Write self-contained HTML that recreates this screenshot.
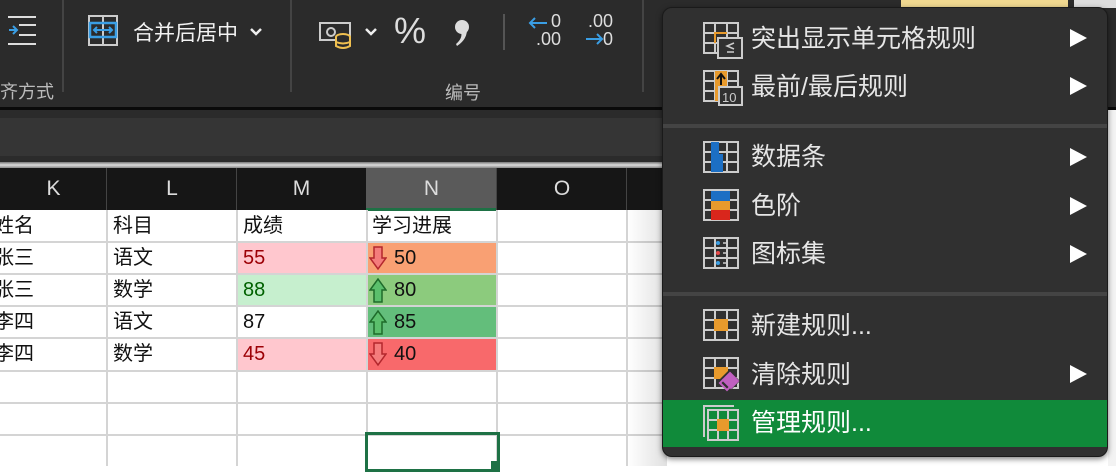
<!DOCTYPE html>
<html><head><meta charset="utf-8"><style>
*{margin:0;padding:0;box-sizing:border-box}
body{width:1116px;height:466px;overflow:hidden;background:#fff;position:relative;font-family:"Liberation Sans","Noto Sans CJK SC",sans-serif}
.a{position:absolute}
.rib{left:0;top:0;width:1116px;height:108px;background:#2b2b2b}
.t{color:#e8e8e8;font-size:21px;white-space:nowrap}
.sep{width:2px;background:#444}
.cell{position:absolute;font-size:20px;color:#111;line-height:32px;padding-left:6px}
.h{position:absolute;top:168px;height:42px;color:#ddd;font-size:21px;text-align:center;line-height:42px}
.vl{position:absolute;width:2px;background:#d4d4d4;top:210px;height:256px}
.hl{position:absolute;height:2px;background:#d4d4d4;left:0;width:662px}
.mi{position:absolute;left:751px;color:#e6e6e6;font-size:25px;white-space:nowrap;line-height:30px}
.ar{position:absolute;left:1070px;width:0;height:0;border-top:9px solid transparent;border-bottom:9px solid transparent;border-left:17px solid #fff}
</style></head><body>
<div class="a rib"></div>
<svg class="a" style="left:6px;top:15px" width="34" height="32"><path d="M2 2H30M13 10H30M13 20H30M2 29H30" stroke="#ddd" stroke-width="2"/><path d="M3 15H11M7 11L11 15L7 19" stroke="#3a9ee4" stroke-width="2" fill="none"/></svg>
<div class="a sep" style="left:62px;top:0;height:92px"></div>
<div class="a t" style="left:0;top:78px;font-size:18px;color:#bbb">齐方式</div>
<svg class="a" style="left:88px;top:15px" width="32" height="32"><rect x="1" y="1" width="28" height="29" fill="none" stroke="#ccc" stroke-width="2"/><path d="M15 1V30" stroke="#ccc" stroke-width="2"/><rect x="2" y="8" width="26" height="14" fill="none" stroke="#3a9ee4" stroke-width="2.5"/><path d="M6 15H24M9 12L6 15L9 18M21 12L24 15L21 18" stroke="#3a9ee4" stroke-width="2" fill="none"/></svg>
<div class="a t" style="left:133px;top:17px;color:#f2f2f2">合并后居中</div>
<svg class="a" style="left:249px;top:27px" width="16" height="12"><path d="M2 2L7 7L12 2" stroke="#eee" stroke-width="2.5" fill="none"/></svg>
<div class="a sep" style="left:290px;top:0;height:92px"></div>
<svg class="a" style="left:318px;top:20px" width="36" height="30"><rect x="2" y="3" width="30" height="17" fill="none" stroke="#ccc" stroke-width="2"/><circle cx="13" cy="12" r="4" fill="none" stroke="#ccc" stroke-width="2"/><ellipse cx="25" cy="17" rx="7" ry="3" fill="#2b2b2b" stroke="#f0c050" stroke-width="2"/><path d="M18 17V26Q25 30 32 26V17M18 22Q25 25 32 22" stroke="#f0c050" stroke-width="2" fill="#2b2b2b"/></svg>
<svg class="a" style="left:364px;top:27px" width="14" height="12"><path d="M2 2L7 7L12 2" stroke="#eee" stroke-width="2.5" fill="none"/></svg>
<div class="a t" style="left:394px;top:10px;font-size:36px;color:#ddd">%</div>
<svg class="a" style="left:452px;top:17px" width="20" height="32"><circle cx="10" cy="10" r="7" fill="#ddd"/><path d="M15 10Q16 22 5 29L4 27Q11 21 9 15Z" fill="#ddd"/></svg>
<div class="a sep" style="left:503px;top:14px;height:36px;background:#555"></div>
<div class="a t" style="left:533px;top:12px;font-size:18px;line-height:18px;color:#ddd;text-align:right;width:28px">0<br>.00</div>
<svg class="a" style="left:527px;top:15px" width="24" height="16"><path d="M3 8H20M8 3L3 8L8 13" stroke="#3a9ee4" stroke-width="2" fill="none"/></svg>
<div class="a t" style="left:585px;top:12px;font-size:18px;line-height:18px;color:#ddd;text-align:right;width:28px">.00<br>0</div>
<svg class="a" style="left:584px;top:31px" width="22" height="16"><path d="M2 8H18M13 3L18 8L13 13" stroke="#3a9ee4" stroke-width="2" fill="none"/></svg>
<div class="a sep" style="left:642px;top:0;height:92px"></div>
<div class="a t" style="left:445px;top:79px;font-size:18px;color:#bbb">编号</div>
<div class="a" style="left:0;top:107px;width:1116px;height:3px;background:#0a0a0a"></div>
<div class="a" style="left:0;top:110px;width:1116px;height:8px;background:#2b2b2b"></div>
<div class="a" style="left:0;top:118px;width:1116px;height:38px;background:#353535"></div>
<div class="a" style="left:0;top:156px;width:1116px;height:6px;background:#2b2b2b"></div>
<div class="a" style="left:0;top:162px;width:1116px;height:6px;background:linear-gradient(#777,#ddd,#888)"></div>
<div class="a" style="left:0;top:168px;width:1116px;height:42px;background:#161616"></div>
<div class="a" style="left:366px;top:168px;width:131px;height:42px;background:#5a5a5a"></div>
<div class="a" style="left:366px;top:208px;width:131px;height:3px;background:#1e7145"></div>
<div class="h" style="left:0;width:107px">K</div>
<div class="h" style="left:107px;width:130px">L</div>
<div class="h" style="left:237px;width:129px">M</div>
<div class="h" style="left:366px;width:131px">N</div>
<div class="h" style="left:497px;width:130px">O</div>
<div class="a" style="left:106px;top:168px;width:1px;height:42px;background:#444"></div>
<div class="a" style="left:236px;top:168px;width:1px;height:42px;background:#444"></div>
<div class="a" style="left:496px;top:168px;width:1px;height:42px;background:#444"></div>
<div class="a" style="left:626px;top:168px;width:1px;height:42px;background:#444"></div>
<div class="a" style="left:237px;top:243px;width:129px;height:31px;background:#ffc7ce"></div>
<div class="a" style="left:237px;top:275px;width:129px;height:31px;background:#c6efce"></div>
<div class="a" style="left:237px;top:339px;width:129px;height:32px;background:#ffc7ce"></div>
<div class="a" style="left:366px;top:243px;width:131px;height:31px;background:#f9a073"></div>
<div class="a" style="left:366px;top:275px;width:131px;height:31px;background:#8ccb7d"></div>
<div class="a" style="left:366px;top:307px;width:131px;height:31px;background:#63be7b"></div>
<div class="a" style="left:366px;top:339px;width:131px;height:32px;background:#f8696b"></div>
<div class="vl" style="left:106px"></div><div class="vl" style="left:236px"></div><div class="vl" style="left:366px"></div><div class="vl" style="left:496px"></div><div class="vl" style="left:626px"></div>
<div class="hl" style="top:241px"></div><div class="hl" style="top:273px"></div><div class="hl" style="top:305px"></div><div class="hl" style="top:337px"></div><div class="hl" style="top:370px"></div><div class="hl" style="top:402px"></div><div class="hl" style="top:434px"></div>
<div class="a" style="left:627px;top:210px;width:40px;height:256px;background:linear-gradient(90deg,rgba(255,255,255,0),rgba(0,0,0,.12))"></div>
<div class="cell" style="left:-12px;top:210px">姓名</div>
<div class="cell" style="left:-12px;top:242px">张三</div>
<div class="cell" style="left:-12px;top:274px">张三</div>
<div class="cell" style="left:-12px;top:306px">李四</div>
<div class="cell" style="left:-12px;top:338px">李四</div>
<div class="cell" style="left:107px;top:210px">科目</div>
<div class="cell" style="left:107px;top:242px">语文</div>
<div class="cell" style="left:107px;top:274px">数学</div>
<div class="cell" style="left:107px;top:306px">语文</div>
<div class="cell" style="left:107px;top:338px">数学</div>
<div class="cell" style="left:237px;top:210px">成绩</div>
<div class="cell" style="left:237px;top:242px;color:#9c0006">55</div>
<div class="cell" style="left:237px;top:274px;color:#006100">88</div>
<div class="cell" style="left:237px;top:306px">87</div>
<div class="cell" style="left:237px;top:338px;color:#9c0006">45</div>
<div class="cell" style="left:366px;top:210px">学习进展</div>
<div class="cell" style="left:388px;top:242px">50</div>
<div class="cell" style="left:388px;top:274px">80</div>
<div class="cell" style="left:388px;top:306px">85</div>
<div class="cell" style="left:388px;top:338px">40</div>
<svg class="a" style="left:369px;top:246px" width="18" height="25"><path d="M5 1H13V12H17L9 23L1 12H5Z" fill="#f47c7c" stroke="#b3272d" stroke-width="1.5"/></svg>
<svg class="a" style="left:369px;top:278px" width="18" height="25"><path d="M5 24H13V12H17L9 1L1 12H5Z" fill="#5bbf6c" stroke="#1e6b2a" stroke-width="1.5"/></svg>
<svg class="a" style="left:369px;top:310px" width="18" height="25"><path d="M5 24H13V12H17L9 1L1 12H5Z" fill="#5bbf6c" stroke="#1e6b2a" stroke-width="1.5"/></svg>
<svg class="a" style="left:369px;top:342px" width="18" height="25"><path d="M5 1H13V12H17L9 23L1 12H5Z" fill="#f47c7c" stroke="#b3272d" stroke-width="1.5"/></svg>
<div class="a" style="left:365px;top:432px;width:135px;height:40px;border:3px solid #1e7145"></div>
<div class="a" style="left:491px;top:461px;width:8px;height:8px;background:#1e7145"></div>
<div class="a" style="left:901px;top:0;width:167px;height:7px;background:#f0d890"></div>
<div class="a" style="left:1074px;top:0;width:42px;height:8px;background:#ddd"></div>
<div class="a" style="left:1108px;top:110px;width:8px;height:356px;background:#f3f3f3"></div>
<div class="a" style="left:662px;top:7px;width:446px;height:450px;background:#303030;border-radius:10px;box-shadow:0 2px 6px rgba(0,0,0,.5);border:1px solid #1a1a1a"></div>
<div class="a" style="left:663px;top:124px;width:444px;height:4px;background:#444"></div>
<div class="a" style="left:663px;top:292px;width:444px;height:4px;background:#444"></div>
<div class="a" style="left:663px;top:400px;width:444px;height:47px;background:#108a3a"></div>
<svg class="a" style="left:703px;top:21px" width="40" height="38"><g stroke="#ccc" stroke-width="2" fill="none"><rect x="1" y="2" width="34" height="30"/><path d="M1 12H35M1 22H35M12 2V32M24 2V32"/></g><path d="M12 11H24V13H13V22H11V11Z" fill="#e89a2c"/><rect x="15" y="17" width="24" height="20" fill="#303030" stroke="#ccc" stroke-width="2"/><path d="M31 22L24 25L31 28M24 31H31" stroke="#ccc" stroke-width="1.5" fill="none"/></svg>
<svg class="a" style="left:703px;top:69px" width="40" height="38"><g stroke="#ccc" stroke-width="2" fill="none"><rect x="1" y="2" width="34" height="30"/><path d="M1 12H35M1 22H35M12 2V32M24 2V32"/></g><rect x="12" y="2" width="12" height="30" fill="#e89a2c"/><path d="M18 16V6M14 10L18 5L22 10" stroke="#111" stroke-width="2" fill="none"/><rect x="16" y="18" width="23" height="18" fill="#303030" stroke="#ccc" stroke-width="2"/><text x="19" y="33" font-size="13" fill="#ccc" font-family="Liberation Sans">10</text></svg>
<svg class="a" style="left:703px;top:140px" width="40" height="36"><g stroke="#ccc" stroke-width="2" fill="none"><rect x="1" y="2" width="34" height="30"/><path d="M1 12H35M1 22H35M12 2V32M24 2V32"/></g><path d="M8 2H16V14H20V32H8Z" fill="#1c6fc4"/></svg>
<svg class="a" style="left:703px;top:188px" width="40" height="36"><g stroke="#ccc" stroke-width="2" fill="none"><rect x="1" y="2" width="34" height="30"/><path d="M1 12H35M1 22H35M12 2V32M24 2V32"/></g><rect x="8" y="3" width="19" height="10" fill="#1c6fc4"/><rect x="8" y="13" width="19" height="9" fill="#e89a2c"/><rect x="8" y="22" width="19" height="10" fill="#d9261c"/></svg>
<svg class="a" style="left:703px;top:236px" width="40" height="36"><g stroke="#ccc" stroke-width="2" fill="none"><rect x="1" y="2" width="34" height="30"/><path d="M1 12H35M1 22H35M12 2V32M24 2V32"/></g><circle cx="15" cy="7" r="2" fill="#3a9ee4"/><circle cx="15" cy="17" r="2" fill="#e84a4a"/><circle cx="15" cy="27" r="2" fill="#3a9ee4"/><path d="M20 7H24M20 17H24M20 27H24" stroke="#ccc" stroke-width="1.5"/></svg>
<svg class="a" style="left:703px;top:308px" width="40" height="36"><g stroke="#ccc" stroke-width="2" fill="none"><rect x="1" y="2" width="34" height="30"/><path d="M1 12H35M1 22H35M12 2V32M24 2V32"/></g><rect x="11" y="11" width="14" height="12" fill="#e89a2c"/></svg>
<svg class="a" style="left:703px;top:356px" width="42" height="40"><g stroke="#ccc" stroke-width="2" fill="none"><rect x="1" y="2" width="34" height="30"/><path d="M1 12H35M1 22H35M12 2V32M24 2V32"/></g><rect x="11" y="11" width="14" height="12" fill="#e89a2c"/><path d="M26 14L37 25L26 36L15 25Z" fill="#303030"/><path d="M27 17L35 25L28 32L20 24Z" fill="#c060c0" stroke="#c060c0" stroke-width="2"/><path d="M20 24L27 31L24 34L17 27Z" fill="#303030" stroke="#c060c0" stroke-width="2"/></svg>
<svg class="a" style="left:703px;top:404px" width="40" height="38"><g stroke="#ccc" stroke-width="2" fill="none"><rect x="5" y="6" width="30" height="30"/><path d="M5 16H35M5 26H35M15 6V36M25 6V36"/><path d="M1 33V2H31"/></g><rect x="14" y="15" width="12" height="12" fill="#e89a2c"/></svg>
<div class="mi" style="top:24px">突出显示单元格规则</div>
<div class="mi" style="top:72px">最前/最后规则</div>
<div class="mi" style="top:142px">数据条</div>
<div class="mi" style="top:191px">色阶</div>
<div class="mi" style="top:239px">图标集</div>
<div class="mi" style="top:311px">新建规则...</div>
<div class="mi" style="top:360px">清除规则</div>
<div class="mi" style="top:408px;color:#fff">管理规则...</div>
<div class="ar" style="top:29px"></div>
<div class="ar" style="top:77px"></div>
<div class="ar" style="top:148px"></div>
<div class="ar" style="top:197px"></div>
<div class="ar" style="top:245px"></div>
<div class="ar" style="top:365px"></div>
</body></html>
